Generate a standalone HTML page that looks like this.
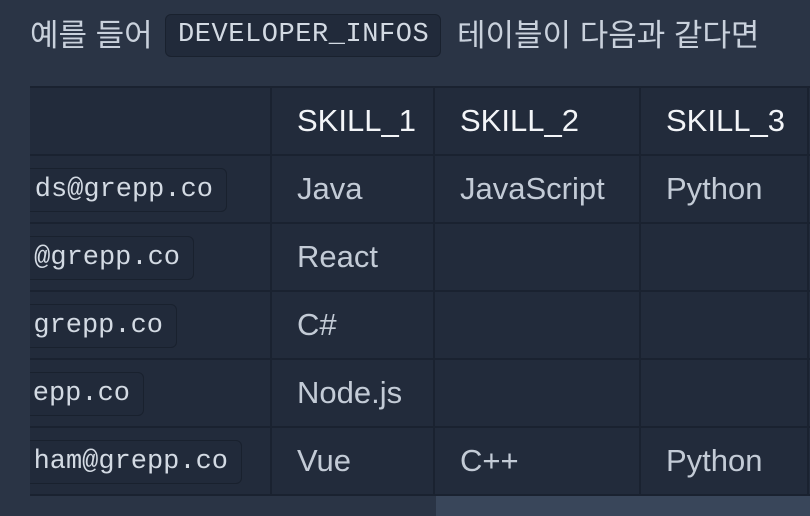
<!DOCTYPE html>
<html><head><meta charset="utf-8"><style>
body{margin:0;width:810px;height:516px;background:#2a3445;overflow:hidden;position:relative;font-family:"Liberation Sans","Noto Sans CJK KR",sans-serif;}
.k{position:absolute;top:14px;color:#c9d1dc;font-size:31px;line-height:43px;white-space:nowrap}
.code{position:absolute;left:165px;top:14px;width:250px;font-family:"Liberation Mono",monospace;background:#212a3a;border:1px solid #19212e;border-radius:6px;padding:0 12px;font-size:27px;letter-spacing:0.55px;color:#d3dae3;line-height:41px;white-space:nowrap}
.tbl{position:absolute;left:30px;top:86px;width:780px;height:410px;background:#222b3b;overflow:hidden}
.hl{position:absolute;left:0;width:780px;height:2px;background:#1a2230}
.vl{position:absolute;top:0;height:410px;width:2px;background:#1a2230}
.c{position:absolute;font-size:31px;color:#c3cbd6;white-space:nowrap}
.h{color:#f3f5f8}
.p{position:absolute;font-family:"Liberation Mono",monospace;font-size:27px;color:#d3dae3;background:#212a3a;border:1px solid #19212e;border-radius:6px;height:42px;line-height:42px;text-align:right;padding-right:13px;white-space:nowrap;left:-100px}
.sb{position:absolute;left:436px;top:496px;width:374px;height:20px;background:#39465a}
</style></head><body>
<div class="k" style="left:30px">예를 들어</div>
<div class="code">DEVELOPER_INFOS</div>
<div class="k" style="left:457px">테이블이 다음과 같다면</div>
<div class="tbl">
<div class="hl" style="top:0"></div>
<div class="hl" style="top:68px"></div>
<div class="hl" style="top:136px"></div>
<div class="hl" style="top:204px"></div>
<div class="hl" style="top:272px"></div>
<div class="hl" style="top:340px"></div>
<div class="hl" style="top:408px"></div>
<div class="vl" style="left:240px"></div>
<div class="vl" style="left:403px"></div>
<div class="vl" style="left:609px"></div>
<div class="vl" style="left:777px"></div>
<div class="c h" style="left:267px;top:17px">SKILL_1</div>
<div class="c h" style="left:430px;top:17px">SKILL_2</div>
<div class="c h" style="left:636px;top:17px">SKILL_3</div>
<div class="p" style="top:82px;width:282px">ds@grepp.co</div>
<div class="p" style="top:150px;width:249px">@grepp.co</div>
<div class="p" style="top:218px;width:232px">grepp.co</div>
<div class="p" style="top:286px;width:199px">epp.co</div>
<div class="p" style="top:354px;width:297px">ham@grepp.co</div>
<div class="c" style="left:267px;top:85px">Java</div>
<div class="c" style="left:430px;top:85px">JavaScript</div>
<div class="c" style="left:636px;top:85px">Python</div>
<div class="c" style="left:267px;top:153px">React</div>
<div class="c" style="left:267px;top:221px">C#</div>
<div class="c" style="left:267px;top:289px">Node.js</div>
<div class="c" style="left:267px;top:357px">Vue</div>
<div class="c" style="left:430px;top:357px">C++</div>
<div class="c" style="left:636px;top:357px">Python</div>
</div>
<div class="sb"></div>
</body></html>
